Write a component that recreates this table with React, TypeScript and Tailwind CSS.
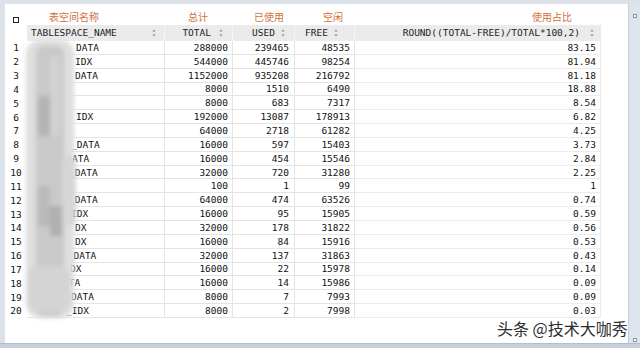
import React from "react";

type Row = [number, number, string, number, number, number, string];

// [no, x of visible name part, name part, total, used, free, pct]
const rows: Row[] = [
  [1, 76, "DATA", 288000, 239465, 48535, "83.15"],
  [2, 75, "IDX", 544000, 445746, 98254, "81.94"],
  [3, 75, "DATA", 1152000, 935208, 216792, "81.18"],
  [4, 76, "", 8000, 1510, 6490, "18.88"],
  [5, 76, "", 8000, 683, 7317, "8.54"],
  [6, 76, "IDX", 192000, 13087, 178913, "6.82"],
  [7, 76, "", 64000, 2718, 61282, "4.25"],
  [8, 71, "_DATA", 16000, 597, 15403, "3.73"],
  [9, 72, "ATA", 16000, 454, 15546, "2.84"],
  [10, 69, "_DATA", 32000, 720, 31280, "2.25"],
  [11, 76, "", 100, 1, 99, "1"],
  [12, 69, "_DATA", 64000, 474, 63526, "0.74"],
  [13, 71, "IDX", 16000, 95, 15905, "0.59"],
  [14, 75, "DX", 32000, 178, 31822, "0.56"],
  [15, 75, "DX", 16000, 84, 15916, "0.53"],
  [16, 62, "R_DATA", 32000, 137, 31863, "0.43"],
  [17, 70, "DX", 16000, 22, 15978, "0.14"],
  [18, 63, "ATA", 16000, 14, 15986, "0.09"],
  [19, 71, "DATA", 8000, 7, 7993, "0.09"],
  [20, 66, "_IDX", 8000, 2, 7998, "0.03"],
];

const mono = "font-['DejaVu_Sans_Mono','Liberation_Mono',monospace] text-[9.5px]";

function SortIcon() {
  return (
    <svg width="4" height="8" viewBox="0 0 4 8" className="shrink-0">
      <path d="M2 0.5 L3.6 2.6 H0.4 Z" fill="#8a8a8a" />
      <path d="M2 7.5 L3.6 5.4 H0.4 Z" fill="#8a8a8a" />
    </svg>
  );
}

export default function App() {
  return (
    <div className="relative w-[640px] h-[348px] overflow-hidden bg-[#e2e6ec] flex flex-col">
      <div className="h-[4px] bg-[#dde2ea]" />
      <div className="flex flex-1">
        <div className="w-[5px] bg-[#dde2ea]" />
        {/* white panel */}
        <div className="w-[623px] bg-white flex flex-col pt-[4px]">
          {/* chinese labels */}
          <div className="flex h-[17px] items-center text-[10px] text-[#d0703e] font-['Noto_Sans_CJK_SC',sans-serif]">
            <div className="w-[22px] flex justify-center pt-[7px]">
              <div className="w-[6px] h-[6px] border border-[#222]" />
            </div>
            <div className="w-[138px] pl-[22px]">表空间名称</div>
            <div className="w-[68px] pl-[23px]">总计</div>
            <div className="w-[62px] pl-[21px]">已使用</div>
            <div className="w-[60px] pl-[28px]">空闲</div>
            <div className="w-[246px] pl-[177px]">使用占比</div>
          </div>
          {/* header */}
          <div className={`flex h-[16px] text-[#222] ${mono}`}>
            <div className="w-[22px]" />
            <div className="w-[138px] bg-[#ebebeb] border-r border-[#f6f6f6] flex items-center justify-between pl-[4px] pr-[8px]">
              <span>TABLESPACE_NAME</span>
              <SortIcon />
            </div>
            <div className="w-[68px] bg-[#ebebeb] border-r border-[#f6f6f6] flex items-center justify-end gap-[8px] pr-[9px]">
              <span>TOTAL</span>
              <SortIcon />
            </div>
            <div className="w-[62px] bg-[#ebebeb] border-r border-[#f6f6f6] flex items-center justify-end gap-[6px] pr-[9px]">
              <span>USED</span>
              <SortIcon />
            </div>
            <div className="w-[60px] bg-[#ebebeb] border-r border-[#f6f6f6] flex items-center justify-end gap-[6px] pr-[16px]">
              <span>FREE</span>
              <SortIcon />
            </div>
            <div className="w-[246px] bg-[#ebebeb] flex items-center justify-end gap-[10px] pr-[7px]">
              <span>ROUND((TOTAL-FREE)/TOTAL*100,2)</span>
              <SortIcon />
            </div>
          </div>
          {/* rows */}
          <div className={`flex flex-col text-[#111] ${mono}`}>
            {rows.map(([no, x, name, total, used, free, pct]) => (
              <div key={no} className="flex h-[13.85px] leading-[13px]">
                <div className="w-[22px] flex items-center justify-center">{no}</div>
                <div className="w-[138px] border-b border-r border-[#e4e4e4] flex items-center" style={{ paddingLeft: x - 27 }}>
                  {name}
                </div>
                <div className="w-[68px] border-b border-r border-[#e4e4e4] flex items-center justify-end pr-[4px]">{total}</div>
                <div className="w-[62px] border-b border-r border-[#e4e4e4] flex items-center justify-end pr-[5px]">{used}</div>
                <div className="w-[60px] border-b border-r border-[#e4e4e4] flex items-center justify-end pr-[4px]">{free}</div>
                <div className="w-[246px] border-b border-r border-[#ececec] flex items-center justify-end pr-[4px]">{pct}</div>
              </div>
            ))}
          </div>
        </div>
        {/* right frame strip */}
        <div className="flex-1 bg-[#dfe5ee] border-l border-[#c9d0da] flex flex-col items-center justify-between pt-[10px] pb-[1px]">
          <div className="w-[4px] h-[4px] border border-[#8c96a3] bg-white" />
          <div className="w-[4px] h-[4px] border border-[#8c96a3] bg-white" />
        </div>
      </div>
      <div className="h-[5px] bg-[#c7cfdb] border-t border-[#b4bdca]" />

      {/* blurred name mask */}
      <div className="absolute left-[24px] top-[36px] w-[54px] h-[288px] blur-[2px]">
        <div className="absolute left-[2px] top-[4px] w-[48px] h-[278px] rounded-[14px] bg-[#dedede]" />
        <div className="absolute left-[12px] top-[10px] w-[28px] h-[270px] rounded-[8px] bg-[#c9c9c9]" />
        <div className="absolute left-[14px] top-[60px] w-[14px] h-[40px] bg-[#b4b4b4]" />
        <div className="absolute left-[14px] top-[150px] w-[12px] h-[40px] bg-[#bababa]" />
        <div className="absolute left-[26px] top-[170px] w-[12px] h-[30px] bg-[#b0b0b0]" />
        <div className="absolute left-[26px] top-[20px] w-[10px] h-[80px] bg-[#d2d2d2]" />
        <div className="absolute left-[38px] top-[120px] w-[14px] h-[70px] rounded-[6px] bg-[#d6d6d6]" />
        <div className="absolute left-[4px] top-[230px] w-[42px] h-[46px] rounded-[10px] bg-[#d4d4d4]" />
      </div>

      {/* watermark */}
      <div className="absolute left-[497px] top-[318px] text-[16px] leading-[20px] text-[#2e2e2e] font-['Noto_Sans_CJK_SC',sans-serif] [text-shadow:0_0_2px_#fff,0_0_2px_#fff]">
        头条 @技术大咖秀
      </div>
    </div>
  );
}
